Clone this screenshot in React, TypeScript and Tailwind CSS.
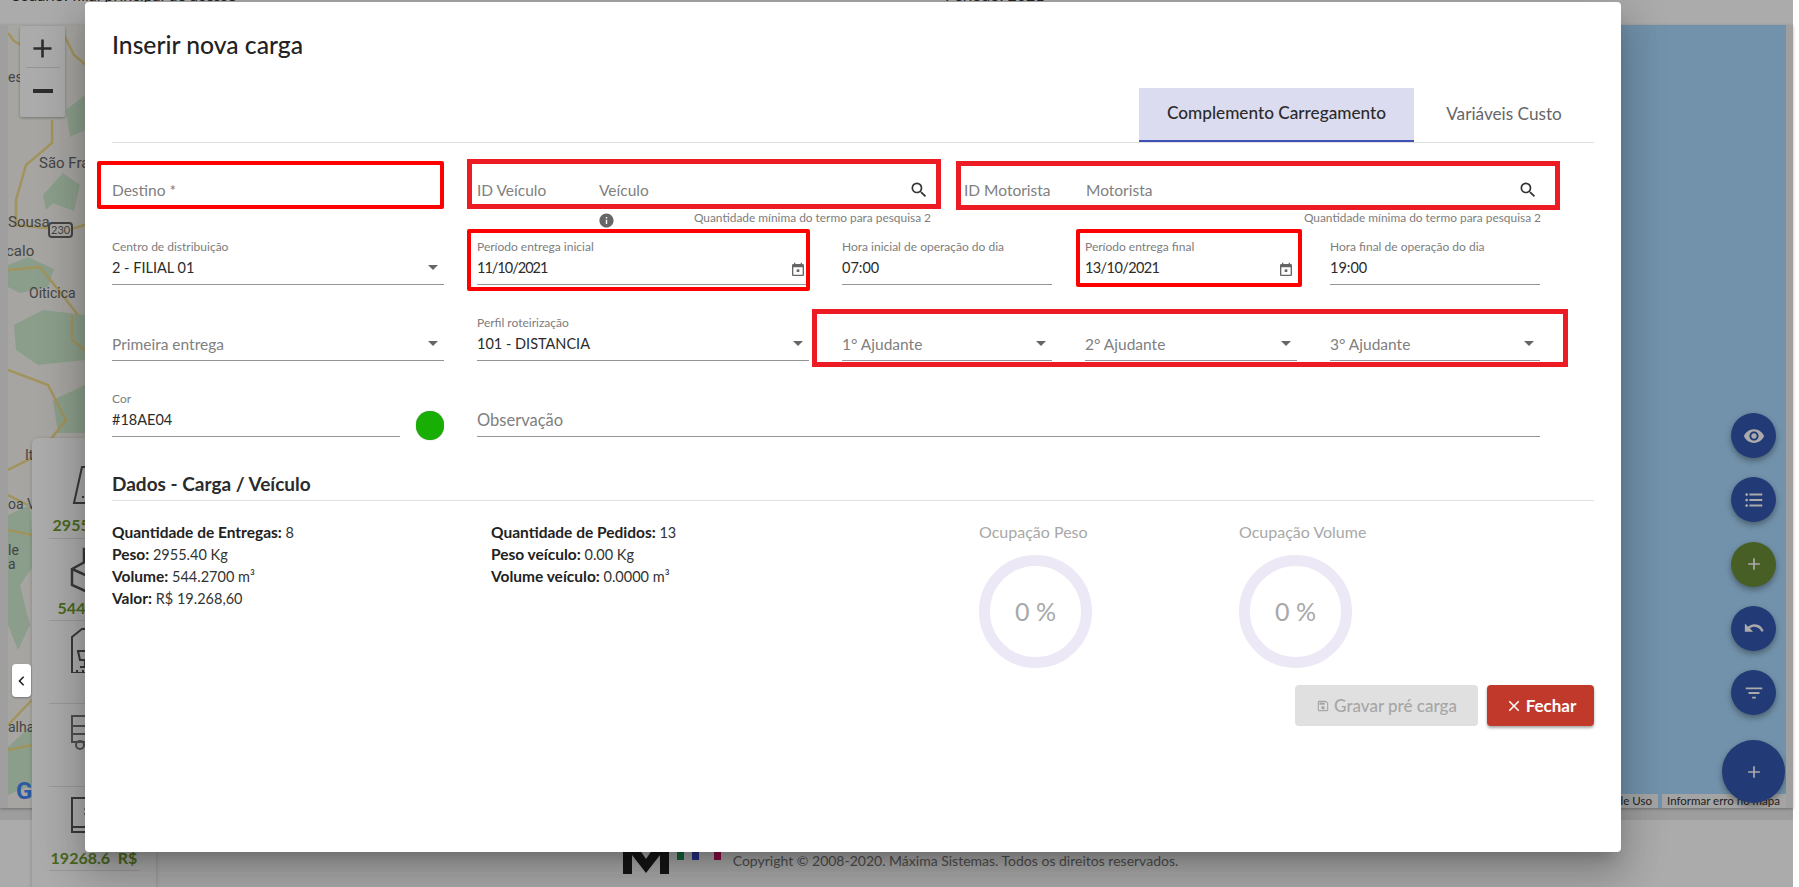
import type { ReactNode } from "react";
import {
  MdAdd,
  MdChevronLeft,
  MdClose,
  MdFilterList,
  MdFormatListBulleted,
  MdInfo,
  MdOutlineSave,
  MdSearch,
  MdUndo,
  MdVisibility,
} from "react-icons/md";

const FONT = "font-['Lato','Noto_Sans',sans-serif]";

function Arrow() {
  return <span className="absolute right-[6px] bottom-[14px] h-0 w-0 border-x-[5px] border-t-[5px] border-x-transparent border-t-[#666]" />;
}

function CalendarIcon() {
  return (
    <svg viewBox="0 0 24 24" className="absolute right-[3px] bottom-[6px] h-[16px] w-[16px]" fill="#666">
      <path d="M19 3h-1V1h-2v2H8V1H6v2H5c-1.11 0-2 .9-2 2v14c0 1.1.89 2 2 2h14c1.1 0 2-.9 2-2V5c0-1.1-.9-2-2-2zm0 16H5V8h14v11z" />
      <rect x="10" y="11" width="4" height="4" />
    </svg>
  );
}

function Field({
  label,
  value,
  placeholder,
  children,
  className = "",
  valueClass = "",
}: {
  label?: string;
  value?: string;
  placeholder?: string;
  children?: ReactNode;
  className?: string;
  valueClass?: string;
}) {
  return (
    <div className={`relative h-[45px] border-b border-[#949494] ${className}`}>
      <div className="h-[18px] text-[12px] leading-[14px] whitespace-nowrap text-[#7d7d7d]">{label}</div>
      <div className={`h-[20px] leading-[20px] whitespace-nowrap ${value ? "text-[14.5px] text-[#2b2b2b]" : "text-[15.5px] text-[#808080]"} ${valueClass}`}>
        {value ?? placeholder}
      </div>
      {children}
    </div>
  );
}

function SearchField({ idLabel, label, iconRight }: { idLabel: string; label: string; iconRight: string }) {
  return (
    <div className="flex">
      <Field placeholder={idLabel} className="w-[122px] shrink-0 border-transparent" />
      <Field placeholder={label} className="flex-1 border-transparent">
        <MdSearch className={`absolute bottom-[6px] text-[20px] text-[#333] ${iconRight}`} />
      </Field>
    </div>
  );
}

function Fab({ big, green, children }: { big?: boolean; green?: boolean; children: ReactNode }) {
  return (
    <div
      className={`flex items-center justify-center rounded-full text-white shadow-[0_3px_6px_rgba(0,0,0,0.35)] ${big ? "h-[63px] w-[63px]" : "h-[45px] w-[45px]"} ${green ? "bg-[#6a8e36]" : "bg-[#3457af]"}`}
    >
      {children}
    </div>
  );
}

function Occupation({ label, width }: { label: string; width: string }) {
  return (
    <div className={width}>
      <div className="text-[16px] leading-[22px] whitespace-nowrap text-[#a8a8a8]">{label}</div>
      <div className="mt-[12px] flex h-[113px] w-[113px] items-center justify-center rounded-full border-[11px] border-[#ede8f5] text-[25px] text-[#a8a8a8]">
        0 %
      </div>
    </div>
  );
}

function Line({ label, value }: { label: string; value: ReactNode }) {
  return (
    <div className="h-[22px] text-[14.5px] leading-[22px] whitespace-nowrap text-[#333]">
      <span className="text-[15.5px] font-bold text-[#222]">{label}</span> {value}
    </div>
  );
}

function MapLabel({ className, children }: { className: string; children: ReactNode }) {
  return <span className={`absolute font-['Roboto',sans-serif] text-[14px] leading-[18px] text-[#666] ${className}`}>{children}</span>;
}

export default function App() {
  return (
    <div className={`relative h-[887px] overflow-hidden bg-white ${FONT}`}>
      <div className="relative flex h-[887px] w-[1793px] flex-col bg-white">
        <div className="h-[25px] shrink-0 overflow-hidden bg-white px-[10px] text-[16px] leading-[6px] text-[#333]">
          <div className="-mt-[8px] flex">
            <span className="w-[935px]">Usuário: filial principal de acesso</span>
            <span>Período: 2021</span>
          </div>
        </div>

        <div className="h-[795px] shrink-0 bg-[#ebebeb]">
          <div className="h-[783px] bg-[#eeeeee] pr-[7px] pl-[8px] shadow-[0_1px_3px_rgba(0,0,0,0.3)]">
            <div className="relative h-[783px] overflow-hidden bg-[#aadaff]">
              <svg viewBox="0 0 100 783" preserveAspectRatio="none" className="absolute top-0 left-0 h-[783px] w-[100px]">
                <rect width="100" height="783" fill="#f8f7f0" />
                <path
                  d="M58 85 L77 70 L77 105 L62 112Z M35 170 L55 148 L72 160 L66 186 L45 178 L38 185Z M0 240 L20 232 L46 244 L40 262 L12 268 L0 262Z M6 300 L35 285 L77 290 L77 335 L30 340 L8 325Z M45 375 L77 360 L77 408 L50 408Z M0 490 L22 480 L26 540 L12 560 L22 600 L10 625 L0 600Z M0 722 L24 700 L24 760 L0 770Z"
                  fill="#cfeccf"
                />
                <path
                  d="M0 8 L6 16 L20 24 M56 10 L66 30 L90 50 M44 95 L44 118 L18 140 L8 175 M8 175 L8 200 L60 205 L90 196 M0 245 L32 242 L48 262 L70 290 M64 290 L64 315 L90 335 M0 345 L40 360 L58 395 L30 430 L0 445 M0 470 L20 480 M0 505 L24 510 L32 545 M0 700 L24 675 M0 725 L24 720"
                  fill="none"
                  stroke="#f1dc8a"
                  strokeWidth="2.5"
                />
              </svg>
              <MapLabel className="top-[43px] left-0">es</MapLabel>
              <MapLabel className="top-[129px] left-[31px] text-[15px]">São Fra</MapLabel>
              <MapLabel className="top-[188px] left-0 text-[15px]">Sousa</MapLabel>
              <span className="absolute top-[197px] left-[40px] rounded-[4px] border-2 border-[#666] bg-[#f8f7f0] px-[1px] text-[11px] leading-[12px] text-[#666]">230</span>
              <MapLabel className="top-[217px] left-[-2px] text-[15px]">calo</MapLabel>
              <MapLabel className="top-[259px] left-[21px]">Oiticica</MapLabel>
              <MapLabel className="top-[421px] left-[17px]">It</MapLabel>
              <MapLabel className="top-[470px] left-0">oa V</MapLabel>
              <MapLabel className="top-[516px] left-0">le</MapLabel>
              <MapLabel className="top-[530px] left-0">a</MapLabel>
              <MapLabel className="top-[693px] left-0">alhac</MapLabel>
              <span className="absolute top-[754px] left-[8px] font-['Roboto',sans-serif] text-[24px] leading-[24px] font-bold text-[#4285f4]">G</span>

              <div className="absolute top-[1px] left-[12px] flex h-[91px] w-[45px] flex-col items-center rounded-[2px] bg-white text-[#444] shadow-[0_1px_3px_rgba(0,0,0,0.3)]">
                <MdAdd className="mt-[7px] text-[31px]" />
                <div className="mt-[3px] h-px w-[34px] bg-[#ddd]" />
                <div className="mt-[21px] h-[4px] w-[20px] bg-[#444]" />
              </div>

              <div className="absolute top-[639px] left-[4px] z-10 flex h-[33px] w-[19px] items-center justify-center rounded-[4px] bg-white shadow-[0_1px_2px_rgba(0,0,0,0.3)]">
                <MdChevronLeft className="text-[20px] text-[#222]" />
              </div>

              <div className="absolute right-0 bottom-0 flex gap-[4px] text-[11.5px] leading-[14px] text-[#333]">
                <span className="bg-[#f5f5f5] px-[6px]">Termos de Uso</span>
                <span className="w-[124px] bg-[#f5f5f5] px-[5px] whitespace-nowrap">Informar erro no mapa</span>
              </div>

              <div className="absolute top-[388px] right-[1px] flex w-[63px] flex-col items-center gap-[19.3px]">
                <Fab><MdVisibility className="text-[22px]" /></Fab>
                <Fab><MdFormatListBulleted className="text-[22px]" /></Fab>
                <Fab green><MdAdd className="text-[20px]" /></Fab>
                <Fab><MdUndo className="text-[22px]" /></Fab>
                <Fab><MdFilterList className="text-[22px]" /></Fab>
                <div className="mt-[6px]">
                  <Fab big><MdAdd className="text-[20px]" /></Fab>
                </div>
              </div>
            </div>
          </div>
        </div>

        <div className="flex h-[67px] shrink-0 items-start justify-center bg-white pl-[8px]">
          <svg viewBox="0 0 46 34" className="mt-[20px] h-[34px] w-[46px]" fill="#222">
            <path d="M0 34V0h10l13 19L36 0h10v34H37V15L23 33 9 15v19Z" />
          </svg>
          <div className="mt-[20px] ml-[8px] flex h-[20px] w-[44px]">
            <span className="h-full w-[7px] bg-[#1f9d55]" />
            <span className="ml-[8px] h-full w-[7px] bg-[#3949c9]" />
            <span className="ml-[15px] h-full w-[7px] bg-[#d5116f]" />
          </div>
          <div className="mt-[31px] ml-[12px] text-[14px] leading-[20px] whitespace-nowrap text-[#777]">
            Copyright © 2008-2020. Máxima Sistemas. Todos os direitos reservados.
          </div>
        </div>

        <div className="absolute top-[438px] left-[32px] flex h-[470px] w-[124px] flex-col items-center rounded-[6px] bg-white pt-[27px] shadow-[0_1px_4px_rgba(0,0,0,0.2)]">
          <div className="mb-[8px] flex h-[74px] w-[90px] flex-col items-center border-b border-[#e4e4e4]">
            <svg viewBox="0 0 48 40" className="h-[40px] w-[48px] shrink-0" fill="none" stroke="#555" strokeWidth="2">
              <path d="M12 2h24l8 36H4Z" />
              <path d="M12 32h2M18 32h2M24 32h2" />
            </svg>
            <div className="mt-[10px] text-[16px] leading-[20px] font-bold whitespace-nowrap text-[#6f9c2f]">2955.40 Kg</div>
          </div>
          <div className="mb-[6px] flex h-[74px] w-[90px] flex-col items-center border-b border-[#e4e4e4]">
            <svg viewBox="0 0 48 48" className="h-[48px] w-[48px] shrink-0" fill="none" stroke="#555" strokeWidth="2.5">
              <path d="M2 22 24 10l22 12v16L24 48 2 38Z" />
              <path d="M2 22l22 10 22-10M24 32v16M14 15V2h20v13" />
            </svg>
            <div className="mt-[3px] text-[16px] leading-[20px] font-bold whitespace-nowrap text-[#6f9c2f]">544.27 m³</div>
          </div>
          <div className="flex h-[77px] w-[90px] justify-center border-b border-[#e4e4e4]">
            <svg viewBox="0 0 48 46" className="h-[46px] w-[48px]" fill="none" stroke="#555" strokeWidth="2">
              <path d="M2 10 12 2h34v44H2Z" />
              <path d="M8 24h14l-2 9h-10ZM15 33v7M10 40h10M6 44h2M12 44h2" />
            </svg>
          </div>
          <div className="flex h-[83px] w-[90px] justify-center border-b border-[#e4e4e4] pt-[10px]">
            <svg viewBox="0 0 48 36" className="h-[36px] w-[48px]" fill="none" stroke="#777" strokeWidth="2">
              <path d="M2 2h34v26H2ZM2 12h34M2 20h34" />
              <circle cx="10" cy="31" r="4" />
            </svg>
          </div>
          <div className="flex w-[90px] flex-col items-center border-b border-[#e4e4e4] pt-[10px]">
            <svg viewBox="0 0 48 36" className="h-[36px] w-[48px]" fill="none" stroke="#555" strokeWidth="2">
              <path d="M2 1h44v34H2ZM2 30h44" />
              <circle cx="24" cy="15" r="9" strokeDasharray="2 3" />
              <circle cx="24" cy="15" r="3" />
            </svg>
            <div className="mt-[15px] mb-[2px] text-[16px] leading-[20px] font-bold whitespace-nowrap text-[#6f9c2f]">19268.6&nbsp; R$</div>
          </div>
        </div>

        <div className="absolute inset-0 bg-black/[0.33]" />
      </div>

      <div className="absolute top-[2px] left-[85px] h-[850px] w-[1536px] rounded-[4px] bg-white px-[27px] pt-[28px] shadow-[0_11px_15px_-7px_rgba(0,0,0,0.2),0_24px_38px_3px_rgba(0,0,0,0.14),0_9px_46px_8px_rgba(0,0,0,0.12)]">
        <h2 className="text-[24.7px] leading-[30px] font-medium text-[#222]">Inserir nova carga</h2>

        <div className="mt-[28px] flex h-[55px] justify-end border-b border-[#e0e0e0]">
          <div className="flex h-[54px] w-[275px] items-center justify-center border-b-2 border-[#3f51b5] bg-[#dcdcf0] pb-[2px] text-[17.2px] font-medium text-[#2b2b2b]">
            Complemento Carregamento
          </div>
          <div className="flex h-[54px] w-[180px] items-center justify-center pb-[2px] text-[17.2px] text-[#666]">Variáveis Custo</div>
        </div>

        <div className="mt-[19px] w-[1429px]">
          <div className="flex">
            <Field placeholder="Destino *" className="w-[332px] border-transparent" />
            <div className="ml-[33px] w-[453px]">
              <SearchField idLabel="ID Veículo" label="Veículo" iconRight="right-[1px]" />
            </div>
            <div className="ml-[34px] w-[577px]">
              <SearchField idLabel="ID Motorista" label="Motorista" iconRight="right-[3px]" />
            </div>
          </div>

          <div className="flex h-[33px]">
            <div className="relative ml-[365px] flex w-[454px] justify-end">
              <MdInfo className="absolute top-[5px] left-[121px] text-[17px] text-[#666]" />
              <span className="mt-[4px] text-[11.9px] leading-[14px] whitespace-nowrap text-[#7d7d7d]">Quantidade mínima do termo para pesquisa 2</span>
            </div>
            <div className="ml-[33px] flex w-[577px] justify-end">
              <span className="mt-[4px] text-[11.9px] leading-[14px] whitespace-nowrap text-[#7d7d7d]">Quantidade mínima do termo para pesquisa 2</span>
            </div>
          </div>

          <div className="grid grid-cols-[332px_332px_210px_212px_210px] gap-x-[33px] gap-y-[31px]">
            <Field label="Centro de distribuição" value="2 - FILIAL 01"><Arrow /></Field>
            <Field label="Período entrega inicial" value="11/10/2021" valueClass="tracking-[-1px]"><CalendarIcon /></Field>
            <Field label="Hora inicial de operação do dia" value="07:00" />
            <Field label="Período entrega final" value="13/10/2021" valueClass="tracking-[-0.6px]"><CalendarIcon /></Field>
            <Field label="Hora final de operação do dia" value="19:00" />

            <Field placeholder="Primeira entrega"><Arrow /></Field>
            <Field label="Perfil roteirização" value="101 - DISTANCIA"><Arrow /></Field>
            <Field placeholder="1° Ajudante"><Arrow /></Field>
            <Field placeholder="2° Ajudante"><Arrow /></Field>
            <Field placeholder="3° Ajudante"><Arrow /></Field>

            <div className="flex items-start gap-[16px]">
              <Field label="Cor" value="#18AE04" className="flex-1" />
              <span className="mt-[19px] h-[29px] w-[28px] shrink-0 rounded-full bg-[#18ae04] shadow-[0_0_1px_rgba(0,0,0,0.5)]" />
            </div>
            <Field placeholder="Observação" className="col-span-4" valueClass="text-[16.5px]" />
          </div>
        </div>

        <div className="mt-[32px] h-[29px] border-b border-[#e0e0e0] text-[19px] leading-[24px] font-bold text-[#2b2b2b]">Dados - Carga / Veículo</div>

        <div className="mt-[20px] flex h-[147px]">
          <div className="w-[379px]">
            <Line label="Quantidade de Entregas:" value="8" />
            <Line label="Peso:" value="2955.40 Kg" />
            <Line label="Volume:" value="544.2700 m³" />
            <Line label="Valor:" value="R$ 19.268,60" />
          </div>
          <div className="w-[488px]">
            <Line label="Quantidade de Pedidos:" value="13" />
            <Line label="Peso veículo:" value="0.00 Kg" />
            <Line label="Volume veículo:" value="0.0000 m³" />
          </div>
          <Occupation label="Ocupação Peso" width="w-[260px]" />
          <Occupation label="Ocupação Volume" width="w-[200px]" />
        </div>

        <div className="mt-[17px] flex justify-end gap-[9px]">
          <button type="button" className="flex h-[41px] w-[183px] items-center justify-center gap-[4px] rounded-[4px] bg-[#e0e0e0] text-[17px] font-medium text-[#a6a6a6]">
            <MdOutlineSave className="text-[14px]" /> Gravar pré carga
          </button>
          <button type="button" className="flex h-[41px] w-[107px] items-center justify-center gap-[3px] rounded-[4px] bg-[#c0392b] text-[17px] font-bold text-white shadow-[0_2px_3px_rgba(0,0,0,0.35)]">
            <MdClose className="text-[18px]" /> Fechar
          </button>
        </div>
      </div>

      <div className="absolute top-[161px] left-[97px] h-[48px] w-[347px] rounded-[2px] border-[4px] border-[#ff0000]" />
      <div className="absolute top-[159px] left-[467px] h-[50px] w-[474px] border-[5px] border-[#ed1c24]" />
      <div className="absolute top-[161px] left-[956px] h-[49px] w-[604px] border-[5px] border-[#ed1c24]" />
      <div className="absolute top-[229px] left-[467px] h-[62px] w-[343px] rounded-[2px] border-[4px] border-[#ff0000]" />
      <div className="absolute top-[229px] left-[1076px] h-[58px] w-[226px] rounded-[2px] border-[4px] border-[#ff0000]" />
      <div className="absolute top-[309px] left-[812px] h-[58px] w-[756px] border-[5px] border-[#ed1c24]" />
    </div>
  );
}
